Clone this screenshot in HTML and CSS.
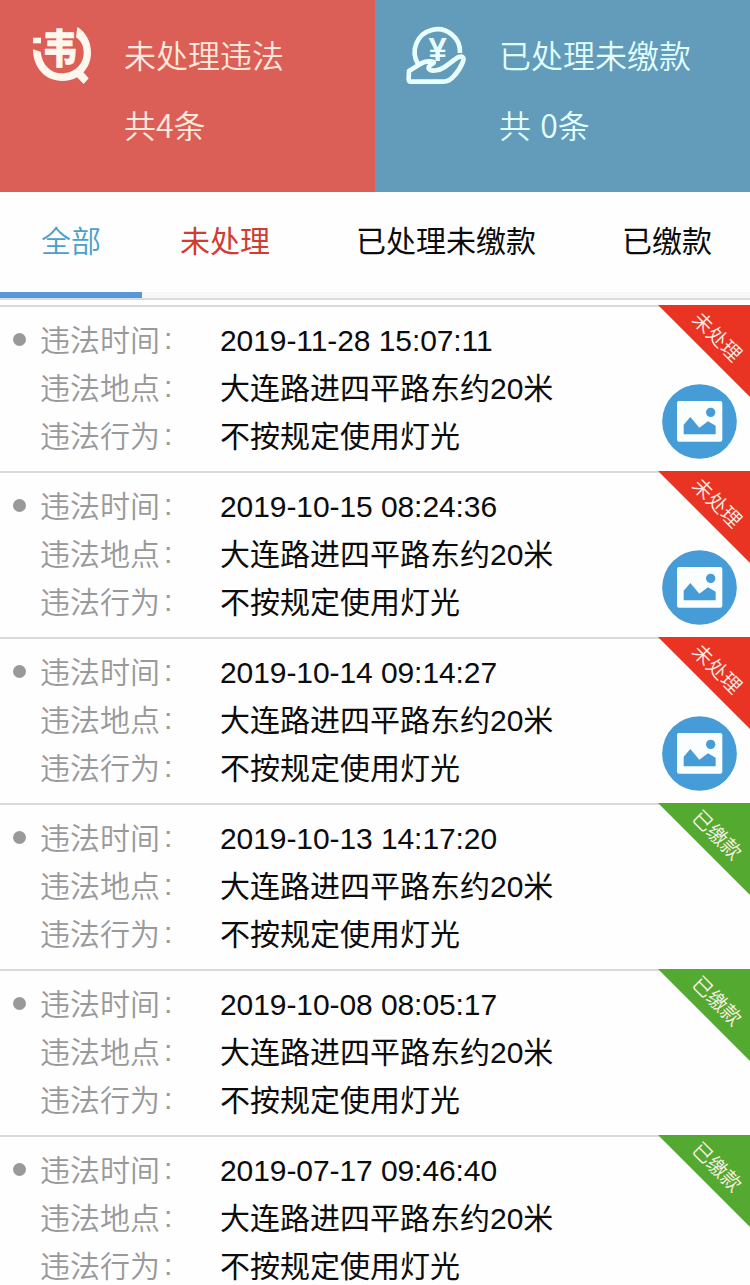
FILE: index.html
```html
<!DOCTYPE html>
<html lang="zh-CN">
<head>
    <meta charset="UTF-8">
    <meta name="viewport" content="width=device-width, initial-scale=1.0">
    <title>违法查询</title>
    <link rel="stylesheet" href="styles.css">
</head>
<body>

    <!-- Shared icon -->
    <svg class="defs" width="0" height="0">
        <symbol id="photo" viewBox="0 0 225 225">
            <circle cx="112.500" cy="112.500" r="112" fill="#459cd6"/>
            <rect x="45" y="51" width="136" height="122" rx="6" fill="#fafeff"/>
            <circle cx="146" cy="85" r="14" fill="#459cd6"/>
            <path d="M65 151V122L85 99L112 131L138 112L161 125V151Z" fill="#459cd6"/>
        </symbol>
    </svg>

    <!-- Summary -->
    <header class="summary">
        <div class="summary-card pending">
            <svg class="summary-icon" viewBox="0 0 270 240">
                <path d="M39 103L62 110C66 150 92 175 126 175C166 175 192 145 191 112C191 92 182 76 168 67L172 36C197 51 213 80 213 112C213 138 204 158 190 172L206 190L191 207L171 187C158 195 143 198 126 198C78 198 39 160 39 103Z" fill="#fff6ee"/>
                <rect x="39" y="68" width="24" height="17" fill="#fff6ee"/>
                <text class="logo-char" transform="translate(119 145) scale(0.82 0.95)">韦</text>
            </svg>
            <div>
                <p>未处理违法</p>
                <p>共4条</p>
            </div>
        </div>
        <div class="summary-card handled">
            <svg class="summary-icon" viewBox="0 0 270 240">
                <g fill="none" stroke="#e9ffff" stroke-width="14" stroke-linejoin="round">
                    <path d="M69 146A68 68 0 1 1 195 114"/>
                    <path d="M42 168L76 147Q90 137 113 140C126 144 97 149 101 161C106 170 132 168 149 156L187 128C202 121 210 127 203 142Q194 165 176 184Q163 200 145 200H48Q41 200 41 192Z"/>
                </g>
                <text class="yen" x="128" y="139">¥</text>
            </svg>
            <div>
                <p>已处理未缴款</p>
                <p>共 0条</p>
            </div>
        </div>
    </header>

    <!-- Tabs -->
    <nav class="tabs">
        <a class="tab active">全部</a>
        <a class="tab red">未处理</a>
        <a class="tab">已处理未缴款</a>
        <a class="tab">已缴款</a>
    </nav>

    <!-- Records -->
    <main class="records">
        <section class="record">
            <i class="dot"></i>
            <dl>
                <dt>违法时间<span class="colon">:</span></dt><dd class="time">2019-11-28 15:07:11</dd>
                <dt>违法地点<span class="colon">:</span></dt><dd>大连路进四平路东约20米</dd>
                <dt>违法行为<span class="colon">:</span></dt><dd>不按规定使用灯光</dd>
            </dl>
            <svg class="photo"><use href="#photo"/></svg>
            <div class="ribbon unpaid"><span>未处理</span></div>
        </section>
        <section class="record">
            <i class="dot"></i>
            <dl>
                <dt>违法时间<span class="colon">:</span></dt><dd class="time">2019-10-15 08:24:36</dd>
                <dt>违法地点<span class="colon">:</span></dt><dd>大连路进四平路东约20米</dd>
                <dt>违法行为<span class="colon">:</span></dt><dd>不按规定使用灯光</dd>
            </dl>
            <svg class="photo"><use href="#photo"/></svg>
            <div class="ribbon unpaid"><span>未处理</span></div>
        </section>
        <section class="record">
            <i class="dot"></i>
            <dl>
                <dt>违法时间<span class="colon">:</span></dt><dd class="time">2019-10-14 09:14:27</dd>
                <dt>违法地点<span class="colon">:</span></dt><dd>大连路进四平路东约20米</dd>
                <dt>违法行为<span class="colon">:</span></dt><dd>不按规定使用灯光</dd>
            </dl>
            <svg class="photo"><use href="#photo"/></svg>
            <div class="ribbon unpaid"><span>未处理</span></div>
        </section>
        <section class="record">
            <i class="dot"></i>
            <dl>
                <dt>违法时间<span class="colon">:</span></dt><dd class="time">2019-10-13 14:17:20</dd>
                <dt>违法地点<span class="colon">:</span></dt><dd>大连路进四平路东约20米</dd>
                <dt>违法行为<span class="colon">:</span></dt><dd>不按规定使用灯光</dd>
            </dl>
            <div class="ribbon paid"><span>已缴款</span></div>
        </section>
        <section class="record">
            <i class="dot"></i>
            <dl>
                <dt>违法时间<span class="colon">:</span></dt><dd class="time">2019-10-08 08:05:17</dd>
                <dt>违法地点<span class="colon">:</span></dt><dd>大连路进四平路东约20米</dd>
                <dt>违法行为<span class="colon">:</span></dt><dd>不按规定使用灯光</dd>
            </dl>
            <div class="ribbon paid"><span>已缴款</span></div>
        </section>
        <section class="record">
            <i class="dot"></i>
            <dl>
                <dt>违法时间<span class="colon">:</span></dt><dd class="time">2019-07-17 09:46:40</dd>
                <dt>违法地点<span class="colon">:</span></dt><dd>大连路进四平路东约20米</dd>
                <dt>违法行为<span class="colon">:</span></dt><dd>不按规定使用灯光</dd>
            </dl>
            <div class="ribbon paid"><span>已缴款</span></div>
        </section>
    </main>

</body>
</html>
```

FILE: styles.css
```css
* {
    box-sizing: border-box;
    margin: 0;
    padding: 0;
}

body {
    display: flex;
    flex-direction: column;
    height: 100vh;
    overflow: hidden;
    font-family: "Liberation Sans", "Noto Sans CJK SC", sans-serif;
    font-size: 30px;
    color: #0c0c0c;
    background: #fefefe;
}

.defs {
    position: absolute;
}

/* Summary */
.summary {
    display: flex;
    flex: none;
    height: 192px;
}

.summary-card {
    display: flex;
    flex: 1;
    gap: 14px;
    padding-left: 20px;
    font-family: "Noto Sans CJK SC", sans-serif;
    font-size: 32px;
    font-weight: 350;
    line-height: 70px;
}

.summary-card div {
    padding-top: 19px;
}

.pending {
    background: #db5e57;
    color: #ffe9dc;
}

.handled {
    background: #639bbb;
    color: #e2ffff;
    word-spacing: 2px;
}

.summary-icon {
    width: 90px;
    height: 80px;
    margin-top: 15px;
}

.logo-char {
    font-size: 126px;
    font-weight: 900;
    text-anchor: middle;
    fill: #fff6ee;
    stroke: #fff6ee;
    stroke-width: 2px;
}

.yen {
    font-family: "Liberation Sans", sans-serif;
    font-size: 98px;
    font-weight: 700;
    text-anchor: middle;
    fill: #e9ffff;
}

/* Tabs */
.tabs {
    display: grid;
    flex: none;
    grid-template-columns: 142px 166px 276px 1fr;
    height: 108px;
    border-bottom: 2px solid #dcdcdc;
}

.tab {
    padding-top: 25px;
    line-height: 50px;
    text-align: center;
    border-bottom: 6px solid #f7f7f7;
}

.tab.active {
    color: #4aa0cb;
    font-weight: 350;
    border-color: #5698d8;
}

.tab.red {
    color: #d23c30;
}

/* Records */
.records {
    padding-top: 5px;
}

.record {
    position: relative;
    display: flex;
    height: 166px;
    padding: 10px 13px;
    border-top: 2px solid #dadada;
}

.dot {
    width: 13px;
    height: 13px;
    margin-top: 16px;
    border-radius: 50%;
    background: #999;
}

.record dl {
    display: grid;
    grid-template-columns: 180px auto;
    margin-left: 14px;
    line-height: 48px;
}

.record dt {
    color: #999;
    font-weight: 350;
}

.time {
    letter-spacing: -0.08px;
    font-kerning: normal;
}

.colon {
    margin-left: 4px;
    vertical-align: 2px;
    line-height: 1;
}

.photo {
    width: 75px;
    height: 75px;
    margin: 67px 0 0 auto;
}

/* Status corner */
.ribbon {
    position: absolute;
    top: -2px;
    right: 0;
    display: flex;
    align-items: center;
    justify-content: center;
    width: 92px;
    height: 92px;
    clip-path: polygon(0 0, 100% 0, 100% 100%);
    font-size: 20px;
    font-weight: 350;
    line-height: 24px;
    color: #fff0e6;
}

.ribbon span {
    white-space: nowrap;
    transform: translate(13px, -14px) rotate(45deg);
}

.unpaid {
    background: #e93323;
}

.paid {
    background: #54aa30;
}
```
